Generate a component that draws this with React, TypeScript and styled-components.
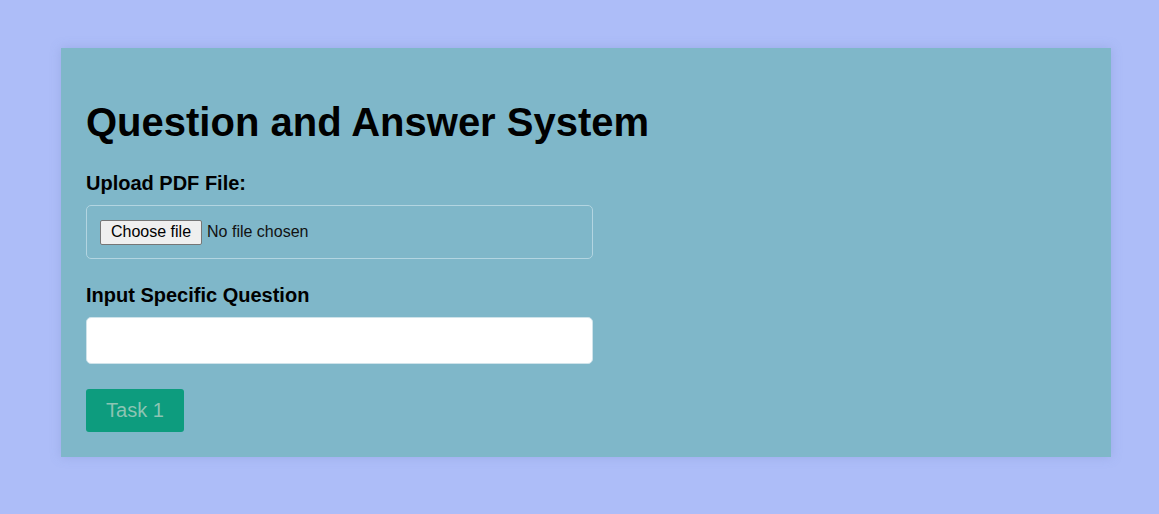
import React from "react";
import styled, { createGlobalStyle } from "styled-components";

const GlobalStyle = createGlobalStyle`
  html, body {
    margin: 0;
    padding: 0;
    background: #adbdf8;
    font-family: "Liberation Sans", Arial, sans-serif;
  }
`;

const Page = styled.div`
  padding: 48px 48px 57px 61px;
  min-height: 514px;
  box-sizing: border-box;
`;

const Card = styled.div`
  width: 1050px;
  box-sizing: border-box;
  background: #7fb7c9;
  padding: 25px;
  display: flex;
  flex-direction: column;
  align-items: flex-start;
  box-shadow: 0 0 10px rgba(120, 140, 200, 0.35);
`;

const Title = styled.h1`
  margin: 27px 0 26px;
  font-size: 40px;
  font-weight: bold;
  color: #000;
`;

const Group = styled.div`
  margin-bottom: 24px;
`;

const Label = styled.label`
  display: block;
  padding-top: 1px;
  font-size: 20px;
  font-weight: bold;
  color: #000;
  margin-bottom: 10px;
`;

const FileBox = styled.label`
  width: 507px;
  box-sizing: border-box;
  height: 54px;
  border: 1px solid #b3d5e1;
  border-radius: 5px;
  padding: 0 13px;
  display: flex;
  align-items: center;
  gap: 5px;
  font-size: 16px;
  color: #111;
  cursor: pointer;
`;

const HiddenFile = styled.input`
  display: none;
`;

const ChooseButton = styled.span`
  display: inline-flex;
  align-items: center;
  height: 25px;
  box-sizing: border-box;
  padding: 0 10px;
  background: #efefef;
  border: 1px solid #767676;
  border-radius: 2px;
  color: #000;
`;

const NoFile = styled.span`
  color: #111;
`;

const TextInput = styled.input`
  display: block;
  width: 507px;
  height: 47px;
  box-sizing: border-box;
  border: 1px solid #cfe3ea;
  border-radius: 5px;
  background: #fff;
  font-size: 16px;
  padding: 0 12px;
  outline: none;
`;

const Button = styled.button`
  display: block;
  margin-top: 1px;
  width: 98px;
  height: 43px;
  border: none;
  border-radius: 3px;
  background: #0d9c7e;
  color: #8cc4b3;
  font-family: "Liberation Sans", Arial, sans-serif;
  font-size: 20px;
  cursor: pointer;
`;

export default function App() {
  return (
    <>
      <GlobalStyle />
      <Page>
        <Card>
          <Title>Question and Answer System</Title>
          <Group>
            <Label htmlFor="pdf">Upload PDF File:</Label>
            <FileBox htmlFor="pdf">
              <HiddenFile id="pdf" type="file" accept="application/pdf" />
              <ChooseButton>Choose file</ChooseButton>
              <NoFile>No file chosen</NoFile>
            </FileBox>
          </Group>
          <Group>
            <Label htmlFor="q">Input Specific Question</Label>
            <TextInput id="q" type="text" />
          </Group>
          <Button disabled>Task 1</Button>
        </Card>
      </Page>
    </>
  );
}
